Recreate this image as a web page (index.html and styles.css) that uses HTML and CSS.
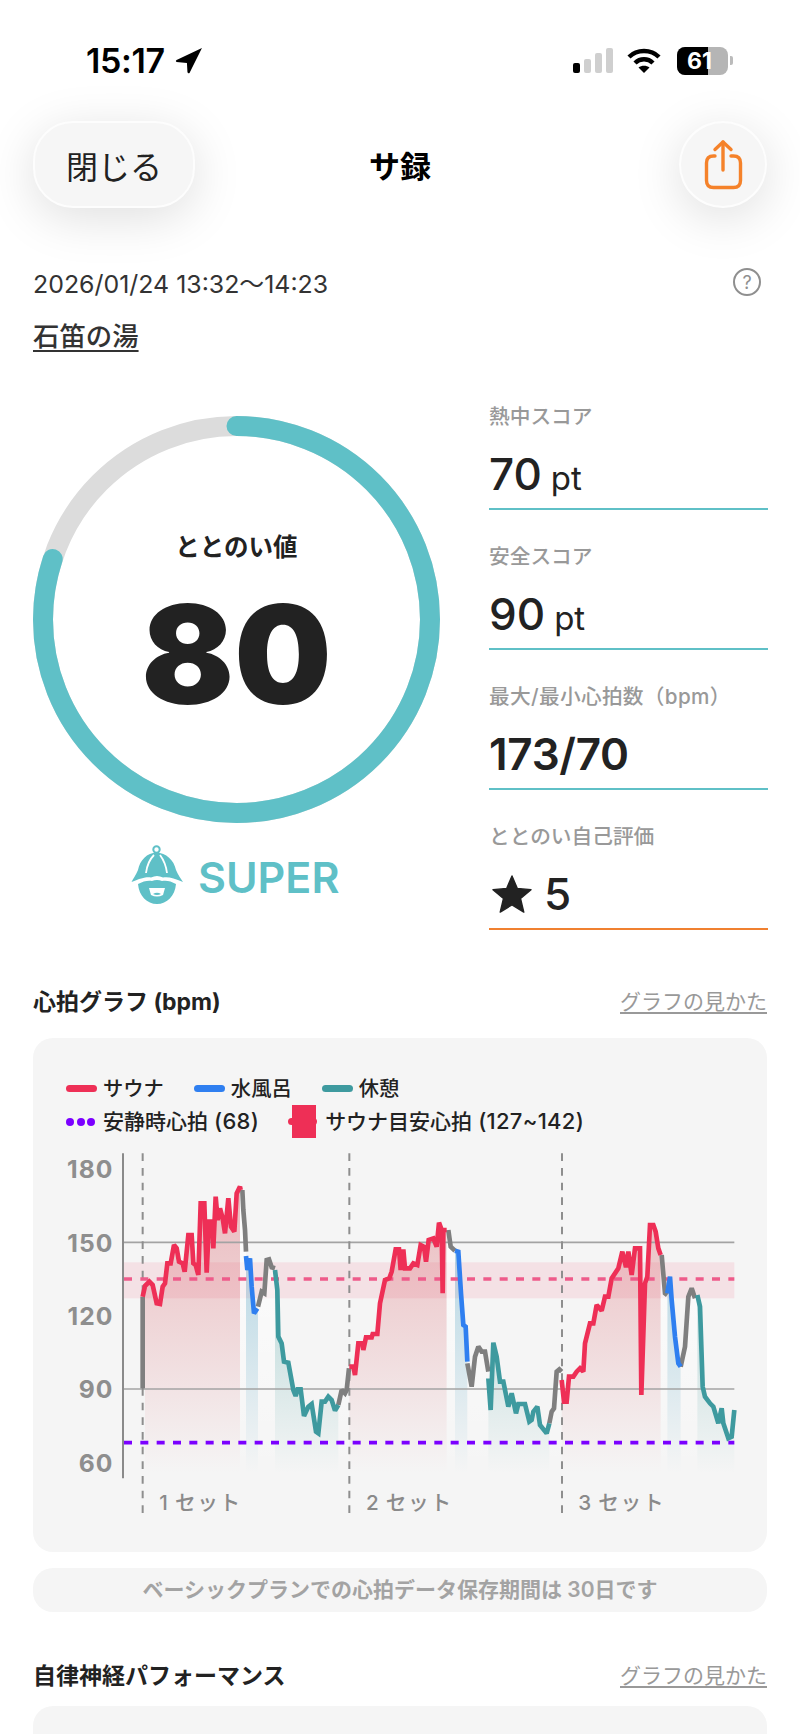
FILE: index.html
```html
<!DOCTYPE html>
<html lang="ja">
<head>
    <meta charset="UTF-8">
    <meta name="viewport" content="width=device-width, initial-scale=1.0">
    <title>サ録</title>
    <link rel="stylesheet" href="styles.css">
</head>
<body>
    <!-- ステータスバー -->
    <div class="status-bar">
        <div class="status-left">
            <span class="status-time">15:17</span>
            <svg class="status-arrow" width="28" height="27" viewBox="0 0 27 26"><path d="M26 1 L14 25 Q12.5 26 12 24 L11.5 15.5 L1.5 14.5 Q0 13.5 1.5 12.5 Z" fill="#000"/></svg>
        </div>
        <div class="status-right">
            <div class="signal">
                <span class="signal-bar bar-on bar-1"></span>
                <span class="signal-bar bar-2"></span>
                <span class="signal-bar bar-3"></span>
                <span class="signal-bar bar-4"></span>
            </div>
            <svg class="wifi" width="34" height="25" viewBox="0 0 34 25" fill="none" stroke="#000" stroke-width="4.4">
                <path d="M2 9 C10 1 24 1 32 9"/>
                <path d="M8 15 C13 10 21 10 26 15"/>
                <path d="M17 25 L11.5 19.5 C14.5 17 19.5 17 22.5 19.5 Z" fill="#000" stroke="none"/>
            </svg>
            <div class="battery"><span class="battery-level"></span><span class="battery-text">61</span></div>
            <span class="battery-cap"></span>
        </div>
    </div>

    <div class="container">
        <!-- ナビゲーション -->
        <div class="nav">
            <button class="close-btn">閉じる</button>
            <div class="nav-title">サ録</div>
            <button class="share-btn">
                <svg width="40" height="52" viewBox="0 0 40 52" fill="none" stroke="#f5822a" stroke-width="3.4" stroke-linecap="round" stroke-linejoin="round">
                    <path d="M12 17 H10.5 Q3.5 17 3.5 24 V41.5 Q3.5 48.5 10.5 48.5 H30.5 Q37.5 48.5 37.5 41.5 V24 Q37.5 17 30.5 17 H28"/>
                    <path d="M20 3 V31"/>
                    <path d="M12 10.5 L20 3 L28 10.5"/>
                </svg>
            </button>
        </div>

        <div class="meta-row">
            <span class="date">2026/01/24 13:32〜14:23</span>
            <span class="help">?</span>
        </div>
        <a class="venue">石笛の湯</a>

        <!-- スコア -->
        <div class="score-section">
            <div class="gauge-col">
                <div class="gauge">
                    <svg width="407" height="407" viewBox="0 0 407 407" fill="none" stroke-width="20">
                        <circle cx="203.5" cy="203.5" r="193.5" stroke="#dcdcdc"/>
                        <!-- 円周 1215.8 の 80% -->
                        <circle cx="203.5" cy="203.5" r="193.5" stroke="#5fc0c7" stroke-linecap="round" stroke-dasharray="973 1300" transform="rotate(-90 203.5 203.5)"/>
                    </svg>
                    <div class="gauge-text">
                        <div class="gauge-label">ととのい値</div>
                        <div class="gauge-value">80</div>
                    </div>
                </div>
                <div class="rank">
                    <svg width="65" height="65" viewBox="0 0 65 65">
                        <circle cx="31.5" cy="5.5" r="3.2" fill="none" stroke="#5fc0c7" stroke-width="2"/>
                        <path d="M31.5 8.5 C22 9 15 16 13 26 C11 31 8 35 6.5 38 C16 34 22 32.5 26 33.5 C30 31.5 34 31.5 38 33.5 C43 32.5 49 34 58 38 C56 35 53 31 51 26 C49 16 41 9 31.5 8.5 Z" fill="#5fc0c7"/>
                        <path d="M21 29 C22 21 25 15 29 11 M42 29 C41 21 38 15 35 11" fill="none" stroke="#fff" stroke-width="1.8"/>
                        <path d="M13 40 C18 37 24 36 27 37 C30 35.5 34 35.5 37 37 C41 36 46 37 51 40 C50 52 42 60 32 60 C22 60 14 52 13 40 Z" fill="#5fc0c7"/>
                        <path d="M24 44 H40 L38 51 Q32 54 26 51 Z" fill="#fff"/>
                        <path d="M28 50 Q32 47.5 36 50 Q32 52 28 50 Z" fill="#5fc0c7"/>
                    </svg>
                    <span class="rank-text">SUPER</span>
                </div>
            </div>
            <div class="score-list">
                <div class="score-item">
                    <div class="score-label">熱中スコア</div>
                    <div class="score-value">70<span class="unit">pt</span></div>
                </div>
                <div class="score-item">
                    <div class="score-label">安全スコア</div>
                    <div class="score-value">90<span class="unit">pt</span></div>
                </div>
                <div class="score-item">
                    <div class="score-label score-label-wide">最大/最小心拍数（bpm）</div>
                    <div class="score-value score-value-bold">173/70</div>
                </div>
                <div class="score-item score-item-self">
                    <div class="score-label">ととのい自己評価</div>
                    <div class="score-value">
                        <svg class="star" width="40" height="38" viewBox="0 0 42 40"><path d="M21 1 L26.6 14.2 L41 15.4 L30 24.8 L33.4 39 L21 31.4 L8.6 39 L12 24.8 L1 15.4 L15.4 14.2 Z" fill="#222" stroke="#222" stroke-width="1.5" stroke-linejoin="round"/></svg>5
                    </div>
                </div>
            </div>
        </div>

        <!-- 心拍グラフ -->
        <div class="section-head section-head-first">
            <span class="section-title">心拍グラフ (bpm)</span>
            <a class="section-link">グラフの見かた</a>
        </div>
        <div class="chart-card">
            <div class="legend">
                <span class="legend-item"><i class="swatch swatch-sauna"></i>サウナ</span>
                <span class="legend-item"><i class="swatch swatch-water"></i>水風呂</span>
                <span class="legend-item"><i class="swatch swatch-rest"></i>休憩</span>
            </div>
            <div class="legend legend-second">
                <span class="legend-item"><i class="dots"><b></b><b></b><b></b></i>安静時心拍<span class="legend-num">(68)</span></span>
                <span class="legend-item legend-target"><i class="target-mark"></i>サウナ目安心拍<span class="legend-num">(127~142)</span></span>
            </div>

            <!-- 1単位 = 1/3px -->
            <svg class="chart" width="733" height="380" viewBox="9 -90 2199 1140">
                <defs>
                    <linearGradient id="fill-sauna" gradientUnits="userSpaceOnUse" x1="0" y1="50" x2="0" y2="880">
                        <stop offset="0" stop-color="#d8555f" stop-opacity=".36"/>
                        <stop offset="1" stop-color="#d8555f" stop-opacity="0"/>
                    </linearGradient>
                    <linearGradient id="fill-water" gradientUnits="userSpaceOnUse" x1="0" y1="200" x2="0" y2="880">
                        <stop offset="0" stop-color="#6cb4d0" stop-opacity=".46"/>
                        <stop offset="1" stop-color="#6cb4d0" stop-opacity="0"/>
                    </linearGradient>
                    <linearGradient id="fill-rest" gradientUnits="userSpaceOnUse" x1="0" y1="300" x2="0" y2="880">
                        <stop offset="0" stop-color="#4aa5a5" stop-opacity=".34"/>
                        <stop offset="1" stop-color="#4aa5a5" stop-opacity="0"/>
                    </linearGradient>
                    <linearGradient id="fill-other" gradientUnits="userSpaceOnUse" x1="0" y1="100" x2="0" y2="880">
                        <stop offset="0" stop-color="#fff" stop-opacity=".75"/>
                        <stop offset="1" stop-color="#fff" stop-opacity="0"/>
                    </linearGradient>
                </defs>

                <!-- 目安心拍の帯 -->
                <rect class="target-band" x="282" y="247" width="1831" height="108"/>

                <!-- 塗り -->
                <g fill="url(#fill-sauna)">
                    <polygon points="345,318 358,305 368,315 380,370 390,372 398,320 405,310 412,250 422,250 432,195 440,205 447,245 458,250 464,275 475,165 485,165 490,250 497,255 505,285 512,70 523,70 530,278 537,125 547,125 550,205 557,50 563,120 570,85 578,115 585,160 595,55 603,140 613,155 620,40 630,20 630,880 345,880"/>
                    <polygon points="958,560 970,560 975,585 985,490 997,490 1000,510 1008,472 1025,472 1028,462 1042,462 1050,370 1065,300 1078,295 1085,275 1097,208 1107,208 1112,270 1120,208 1125,265 1140,265 1150,250 1162,255 1172,195 1182,200 1188,245 1196,180 1210,175 1220,200 1227,128 1235,150 1250,150 1250,880 958,880"/>
                    <polygon points="1595,600 1602,665 1610,665 1617,590 1630,590 1640,575 1650,565 1660,575 1665,490 1680,430 1690,430 1700,375 1715,392 1725,350 1735,350 1745,295 1765,265 1777,215 1788,262 1795,215 1805,285 1815,205 1830,205 1834,645 1845,310 1852,290 1860,135 1870,135 1877,155 1885,205 1892,225 1892,880 1595,880"/>
                </g>
                <g fill="url(#fill-water)">
                    <polygon points="648,228 652,270 660,235 665,320 672,400 684,385 684,880 648,880"/>
                    <polygon points="1275,212 1285,215 1293,340 1300,435 1307,440 1312,545 1312,880 1275,880"/>
                    <polygon points="1912,340 1920,290 1925,360 1935,470 1945,550 1952,560 1952,880 1912,880"/>
                </g>
                <g fill="url(#fill-rest)">
                    <polygon points="735,270 742,330 745,470 755,490 762,545 775,548 790,630 797,648 803,628 812,628 822,708 835,680 845,672 858,755 865,760 875,665 885,665 895,650 905,660 915,692 925,675 925,880 735,880"/>
                    <polygon points="1375,595 1382,690 1390,488 1400,530 1410,605 1420,605 1435,680 1445,640 1458,700 1465,672 1485,672 1498,725 1505,720 1510,695 1522,680 1530,735 1550,760 1558,730 1558,880 1375,880"/>
                    <polygon points="2002,345 2010,380 2018,620 2025,650 2040,670 2050,680 2065,730 2075,685 2080,730 2095,775 2105,770 2113,690 2113,880 2002,880"/>
                </g>
                <g fill="url(#fill-other)">
                    <polygon points="630,30 640,90 645,150 648,215 648,880 630,880"/>
                    <polygon points="684,380 695,335 703,340 710,240 717,238 725,262 735,262 735,880 684,880"/>
                    <polygon points="925,675 935,630 945,640 950,630 957,565 957,880 925,880"/>
                    <polygon points="1250,150 1262,200 1275,212 1275,880 1250,880"/>
                    <polygon points="1312,550 1325,620 1335,530 1345,500 1355,515 1365,515 1375,575 1375,880 1312,880"/>
                    <polygon points="1558,730 1565,695 1572,685 1580,575 1588,568 1595,575 1595,880 1558,880"/>
                    <polygon points="1892,225 1905,340 1912,345 1912,880 1892,880"/>
                    <polygon points="1952,560 1965,500 1975,350 1985,325 2002,345 2002,880 1952,880"/>
                </g>

                <!-- 軸と目盛り -->
                <line class="grid" x1="282" y1="187" x2="2113" y2="187"/>
                <line class="grid" x1="282" y1="627" x2="2113" y2="627"/>
                <line class="axis" x1="279" y1="-80" x2="279" y2="895"/>
                <line class="set-line" x1="338" y1="-80" x2="338" y2="1020"/>
                <line class="set-line" x1="958" y1="-80" x2="958" y2="1020"/>
                <line class="set-line" x1="1596" y1="-80" x2="1596" y2="1020"/>
                <line class="target-line" x1="282" y1="297" x2="2113" y2="297"/>

                <text class="tick" x="250" y="-5">180</text>
                <text class="tick" x="250" y="215">150</text>
                <text class="tick" x="250" y="435">120</text>
                <text class="tick" x="250" y="655">90</text>
                <text class="tick" x="250" y="875">60</text>
                <text class="set-label" x="388" y="990">1<tspan dx="16">セット</tspan></text>
                <text class="set-label" x="1008" y="990">2<tspan dx="16">セット</tspan></text>
                <text class="set-label" x="1645" y="990">3<tspan dx="16">セット</tspan></text>

                <!-- 心拍の線 -->
                <g class="trace trace-other">
                    <polyline points="338,625 338,350"/>
                    <polyline points="637,30 640,90 645,150 648,215"/>
                    <polyline points="684,380 695,335 703,340 710,240 717,238 725,262 735,265"/>
                    <polyline points="925,675 935,630 945,640 950,630 957,565"/>
                    <polyline points="1255,150 1262,200 1275,212"/>
                    <polyline points="1312,550 1325,620 1335,530 1345,500 1355,515 1365,515 1375,575"/>
                    <polyline points="1558,730 1565,695 1572,685 1580,575 1588,568 1595,575"/>
                    <polyline points="1895,225 1905,340 1912,345"/>
                    <polyline points="1952,560 1965,500 1975,350 1985,325 1995,355"/>
                </g>
                <g class="trace trace-sauna">
                    <polyline points="338,350 345,318 358,305 368,315 380,370 390,372 398,320 405,310 412,250 422,250 432,195 440,205 447,245 458,250 464,275 475,165 485,165 490,250 497,255 505,285 512,70 523,70 530,278 537,125 547,125 550,205 557,50 563,120 570,85 578,115 585,160 595,55 603,140 613,155 620,40 630,20 632,30"/>
                    <polyline points="958,560 970,560 975,585 985,490 997,490 1000,510 1008,472 1025,472 1028,462 1042,462 1050,370 1065,300 1078,295 1085,275 1097,208 1107,208 1112,270 1120,208 1125,265 1140,265 1150,250 1162,255 1172,195 1182,200 1188,245 1196,180 1210,175 1220,200 1227,128 1235,150 1238,340 1240,150 1250,150"/>
                    <polyline points="1595,600 1602,665 1610,665 1617,590 1630,590 1640,575 1650,565 1660,575 1665,490 1680,430 1690,430 1700,375 1715,392 1725,350 1735,350 1745,295 1765,265 1777,215 1788,262 1795,215 1805,285 1815,205 1830,205 1834,645 1845,310 1852,290 1860,135 1870,135 1877,155 1885,205 1892,225"/>
                </g>
                <g class="trace trace-water">
                    <polyline points="648,228 652,270 660,235 665,320 672,400 682,385"/>
                    <polyline points="1275,212 1285,215 1293,340 1300,435 1307,440 1312,545"/>
                    <polyline points="1912,340 1920,290 1925,360 1935,470 1945,550 1952,560"/>
                </g>
                <g class="trace trace-rest">
                    <polyline points="735,270 742,330 745,470 755,490 762,545 775,548 790,630 797,648 803,628 812,628 822,708 835,680 845,672 858,755 865,760 875,665 885,665 895,650 905,660 915,692 925,675"/>
                    <polyline points="1375,595 1382,690 1390,488 1400,530 1410,605 1420,605 1435,680 1445,640 1458,700 1465,672 1485,672 1498,725 1505,720 1510,695 1522,680 1530,735 1550,760 1558,730"/>
                    <polyline points="2002,345 2010,380 2018,620 2025,650 2040,670 2050,680 2065,730 2075,685 2080,730 2095,775 2105,770 2113,690"/>
                </g>

                <line class="rest-line" x1="282" y1="788" x2="2113" y2="788"/>
            </svg>
        </div>

        <div class="plan-note">ベーシックプランでの心拍データ保存期間は 30日です</div>

        <!-- 自律神経パフォーマンス -->
        <div class="section-head section-head-next">
            <span class="section-title">自律神経パフォーマンス</span>
            <a class="section-link">グラフの見かた</a>
        </div>
        <div class="next-card"></div>
    </div>
</body>
</html>
```

FILE: styles.css
```css
html, body {
    margin: 0;
    height: 100%;
    overflow: hidden;
}
body {
    font-family: Inter, 'Noto Sans CJK JP', sans-serif;
    background-color: white;
    color: #222;
}

/* ステータスバー */
.status-bar {
    display: flex;
    justify-content: space-between;
    align-items: center;
    height: 121px;
    box-sizing: border-box;
    padding: 0 67px 0 86px;
}
.status-left, .status-right {
    display: flex;
    align-items: center;
}
.status-time {
    font-size: 34px;
    font-weight: 600;
    color: black;
    letter-spacing: -0.4px;
}
.status-arrow {
    margin-left: 10px;
}
.signal {
    display: flex;
    align-items: flex-end;
    gap: 4px;
    height: 25px;
}
.signal-bar {
    width: 7px;
    border-radius: 2px;
    background-color: #cfcfcf;
}
.bar-on {
    background-color: black;
}
.bar-1 { height: 10px; }
.bar-2 { height: 14px; }
.bar-3 { height: 20px; }
.bar-4 { height: 25px; }
.wifi {
    margin-left: 14px;
}
.battery {
    position: relative;
    width: 51px;
    height: 28px;
    margin-left: 16px;
    border-radius: 8px;
    background-color: #b5b5b5;
    overflow: hidden;
}
.battery-level {
    display: block;
    width: 31px;
    height: 100%;
    background-color: black;
}
.battery-text {
    position: absolute;
    left: 10px;
    top: 0;
    font-size: 23px;
    font-weight: 700;
    line-height: 28px;
    color: white;
}
.battery-cap {
    width: 3px;
    height: 9px;
    margin-left: 2px;
    border-radius: 0 2px 2px 0;
    background-color: #bbb;
}

.container {
    padding: 0 33px;
}

/* ナビゲーション */
.nav {
    position: relative;
    display: flex;
    justify-content: space-between;
    align-items: center;
    height: 87px;
}
.close-btn, .share-btn {
    height: 87px;
    box-sizing: border-box;
    padding: 0;
    border: 2px solid #fdfdfd;
    background-color: #f6f6f6;
    box-shadow: 0 10px 50px rgba(0, 0, 0, 0.13);
    color: #222;
    font-family: inherit;
}
.close-btn {
    width: 162px;
    border-radius: 40px;
    font-size: 32px;
}
.share-btn {
    display: flex;
    align-items: center;
    justify-content: center;
    width: 88px;
    border-radius: 50%;
}
.nav-title {
    position: absolute;
    left: 0;
    right: 0;
    text-align: center;
    font-size: 31px;
    font-weight: 700;
    color: black;
}

.meta-row {
    display: flex;
    justify-content: space-between;
    align-items: center;
    height: 32px;
    margin-top: 58px;
}
.date {
    font-size: 24.9px;
    color: #333;
}
.help {
    display: flex;
    align-items: center;
    justify-content: center;
    width: 28px;
    height: 28px;
    box-sizing: border-box;
    margin-right: 6px;
    border: 2px solid #8f8f8f;
    border-radius: 50%;
    font-size: 18px;
    color: #8f8f8f;
}
.venue {
    display: block;
    width: fit-content;
    margin-top: 19px;
    font-size: 26.4px;
    font-weight: 500;
    line-height: 38px;
    color: #333;
    text-decoration: underline;
    text-underline-offset: 4px;
}

/* スコア */
.score-section {
    display: flex;
    justify-content: space-between;
    margin-top: 15px;
}
.gauge-col {
    width: 407px;
    padding-top: 46px;
}
.gauge {
    position: relative;
    width: 407px;
    height: 407px;
}
.gauge svg {
    display: block;
}
.gauge-text {
    position: absolute;
    left: 0;
    right: 0;
    top: 111px;
    text-align: center;
}
.gauge-label {
    font-size: 24.5px;
    font-weight: 600;
    line-height: 40px;
}
.gauge-value {
    margin-top: 7px;
    font-size: 137px;
    font-weight: 900;
    line-height: 160px;
}
.rank {
    display: flex;
    align-items: center;
    gap: 8px;
    margin-top: 21px;
    margin-left: 92px;
}
.rank svg {
    display: block;
}
.rank-text {
    font-size: 43px;
    font-weight: 600;
    color: #5fc0c7;
}
.score-list {
    width: 279px;
    margin-right: -1px;
}
.score-item {
    height: 140px;
    box-sizing: border-box;
    padding-top: 33px;
    border-bottom: 2px solid #5fc0c7;
}
.score-item-self {
    border-bottom-color: #f08030;
}
.score-label {
    font-size: 20.7px;
    font-weight: 500;
    line-height: 28px;
    color: #999;
}
.score-label-wide {
    letter-spacing: 0.3px;
}
.score-value {
    display: flex;
    align-items: baseline;
    margin-top: 14px;
    font-size: 44px;
    font-weight: 500;
    line-height: 58px;
}
.score-value-bold {
    font-weight: 600;
    letter-spacing: -0.3px;
}
.unit {
    margin-left: 9px;
    font-size: 33px;
    font-weight: 400;
}
.star {
    align-self: center;
    margin: 0 12px 0 3px;
}

/* セクション見出し */
.section-head {
    display: flex;
    justify-content: space-between;
    align-items: center;
    height: 32px;
}
.section-head-first {
    margin-top: 54px;
}
.section-head-next {
    margin-top: 46px;
}
.section-title {
    font-size: 23px;
    font-weight: 700;
}
.section-link {
    font-size: 21px;
    color: #999;
    text-decoration: underline;
    text-underline-offset: 3px;
}

/* 心拍グラフ */
.chart-card {
    height: 514px;
    box-sizing: border-box;
    margin-top: 22px;
    padding-top: 34px;
    border-radius: 20px;
    background-color: #f5f5f5;
}
.legend {
    display: flex;
    height: 33px;
    padding-left: 33px;
    font-size: 20.3px;
    font-weight: 500;
    line-height: 33px;
    color: #222;
}
.legend-second {
    font-size: 21px;
}
.legend-item {
    display: flex;
    align-items: center;
    margin-right: 30px;
}
.legend-num {
    margin-left: 6px;
    font-size: 22px;
    letter-spacing: 0.3px;
}
.swatch {
    width: 31px;
    height: 7px;
    margin-right: 6px;
    border-radius: 4px;
}
.swatch-sauna { background-color: #ee2f56; }
.swatch-water { background-color: #2f7ff0; }
.swatch-rest { background-color: #3e9a9f; }
.dots {
    display: flex;
    gap: 2.5px;
    margin-right: 8px;
}
.dots b {
    width: 8px;
    height: 8px;
    border-radius: 50%;
    background-color: #7b00ff;
}
.legend-target {
    margin-left: 3px;
}
.target-mark {
    position: relative;
    width: 24px;
    height: 33px;
    margin: 0 9px 0 0;
    background-color: #ee2f56;
}
.target-mark::before {
    content: '';
    position: absolute;
    left: -4px;
    right: -1px;
    top: 13px;
    height: 7px;
    border-radius: 4px;
    background-color: #ee2f56;
}
.chart {
    display: block;
    margin-top: 12px;
}
.target-band {
    fill: #ee305a;
    fill-opacity: 0.1;
}
.grid {
    stroke: #a3a3a3;
    stroke-width: 5;
}
.axis {
    stroke: #8a8a8a;
    stroke-width: 6;
}
.set-line {
    stroke: #8e8e8e;
    stroke-width: 6;
    stroke-dasharray: 23 21;
}
.target-line {
    stroke: #ee5b8a;
    stroke-width: 10;
    stroke-dasharray: 24 25;
}
.rest-line {
    stroke: #7b00ff;
    stroke-width: 11;
    stroke-dasharray: 24 25;
}
.tick {
    font-size: 74px;
    font-weight: 700;
    fill: #8e8e8e;
    text-anchor: end;
    letter-spacing: 3px;
}
.set-label {
    font-size: 62px;
    font-weight: 500;
    fill: #8a8a8a;
    letter-spacing: 5px;
}
.trace polyline {
    fill: none;
    stroke-width: 14;
    stroke-linejoin: miter;
    stroke-miterlimit: 2;
}
.trace-sauna { stroke: #ee2f56; }
.trace-water { stroke: #2f7ff0; }
.trace-rest { stroke: #3e9a9f; }
.trace-other { stroke: #7f7f7f; }

.plan-note {
    height: 44px;
    margin-top: 16px;
    border-radius: 20px;
    background-color: #f5f5f5;
    text-align: center;
    font-size: 21px;
    font-weight: 600;
    line-height: 44px;
    color: #a3a3a3;
}
.next-card {
    height: 120px;
    margin-top: 16px;
    border-radius: 20px;
    background-color: #f5f5f5;
}
```
